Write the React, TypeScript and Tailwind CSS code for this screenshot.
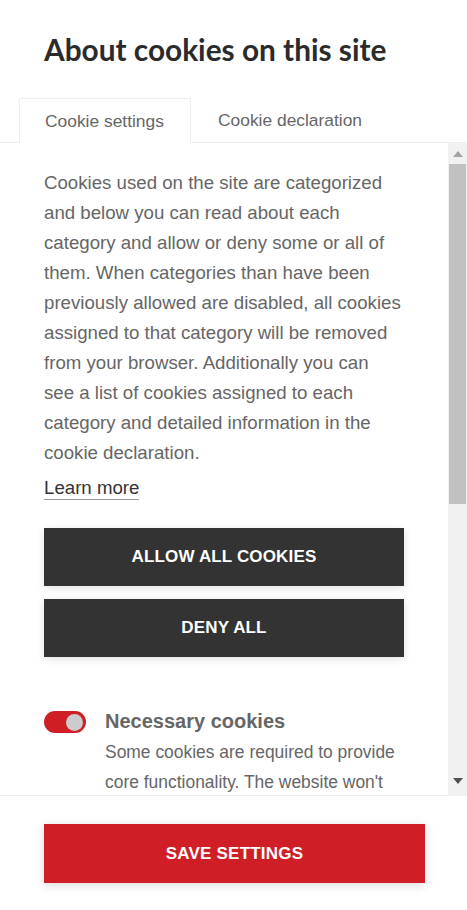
import React from "react";

export default function App() {
  const body = "font-['Liberation_Sans',Arial,sans-serif]";
  return (
    <div className={`w-[467px] h-[910px] bg-white flex flex-col overflow-hidden ${body}`}>
      <div className="px-[44px] pt-[32px] h-[98px]">
        <h1 className="font-['Lato','Liberation_Sans',sans-serif] font-bold text-[29.8px] leading-[36px] text-[#2b2b2b]">
          About cookies on this site
        </h1>
      </div>
      <div className="flex items-end h-[45px] border-b border-[#eeeeee] pl-[19px]">
        <div className="h-[45px] w-[172px] border border-b-0 border-[#eeeeee] bg-white mb-[-1px] flex items-center pl-[25px] text-[17.4px] text-[#666666]">
          Cookie settings
        </div>
        <div className="h-[44px] flex items-center pl-[27px] text-[17.4px] text-[#666666]">
          Cookie declaration
        </div>
      </div>
      <div className="flex h-[653px] border-b border-[#eeeeee]">
        <div className="flex-1 pl-[44px] pt-[25px] overflow-hidden">
          <p className="text-[18.66px] leading-[30px] text-[#666666] w-[358.5px]">
            Cookies used on the site are categorized and below you can read about each category and allow or deny some or all of them. When categories than have been previously allowed are disabled, all cookies assigned to that category will be removed from your browser. Additionally you can see a list of cookies assigned to each category and detailed information in the cookie declaration.
          </p>
          <div className="mt-[5px] h-[30px] flex items-center">
            <span className="text-[18.66px] leading-[22px] text-[#333333] border-b border-[#999999]">Learn more</span>
          </div>
          <div className="mt-[25px] flex flex-col gap-[13px] w-[360px]">
            <button className="h-[58px] bg-[#333333] text-white font-bold text-[17px] tracking-[0.15px] uppercase shadow-[0_2px_8px_rgba(0,0,0,0.12)]">
              Allow all cookies
            </button>
            <button className="h-[58px] bg-[#333333] text-white font-bold text-[17px] tracking-[0.15px] uppercase shadow-[0_2px_8px_rgba(0,0,0,0.12)]">
              Deny all
            </button>
          </div>
          <div className="mt-[39px] flex gap-[19px]">
            <div className="mt-[15px] w-[42px] h-[22px] rounded-full bg-[#cf1f25] flex items-center justify-end pr-[3px] shrink-0">
              <div className="w-[17px] h-[17px] rounded-full bg-[#cccccc]" />
            </div>
            <div className="w-[305px] shrink-0">
              <div className="text-[20px] leading-[30px] font-bold text-[#666666] pt-[10px]">Necessary cookies</div>
              <p className="text-[17.45px] leading-[30px] text-[#666666] pt-[1px]">
                Some cookies are required to provide core functionality. The website won't function properly without these cookies, and they are enabled by default and cannot be disabled.
              </p>
            </div>
          </div>
        </div>
        <div className="w-[19px] bg-[#f1f1f1] flex flex-col items-center shrink-0">
          <div className="h-[21px] w-full flex items-center justify-center">
            <svg width="10" height="6" viewBox="0 0 10 6"><path d="M5 0 L10 6 L0 6 Z" fill="#a3a3a3" /></svg>
          </div>
          <div className="w-[17px] h-[340px] bg-[#c1c1c1]" />
          <div className="flex-1" />
          <div className="h-[21px] w-full flex items-center justify-center mb-[4px]">
            <svg width="10" height="6" viewBox="0 0 10 6"><path d="M0 0 L10 0 L5 6 Z" fill="#505050" /></svg>
          </div>
        </div>
      </div>
      <div className="pl-[44px] pt-[28px]">
        <button className="w-[381px] h-[59px] bg-[#cf1e25] text-white font-bold text-[17px] uppercase tracking-[0.2px] shadow-[0_2px_10px_rgba(0,0,0,0.15)]">
          Save settings
        </button>
      </div>
    </div>
  );
}
